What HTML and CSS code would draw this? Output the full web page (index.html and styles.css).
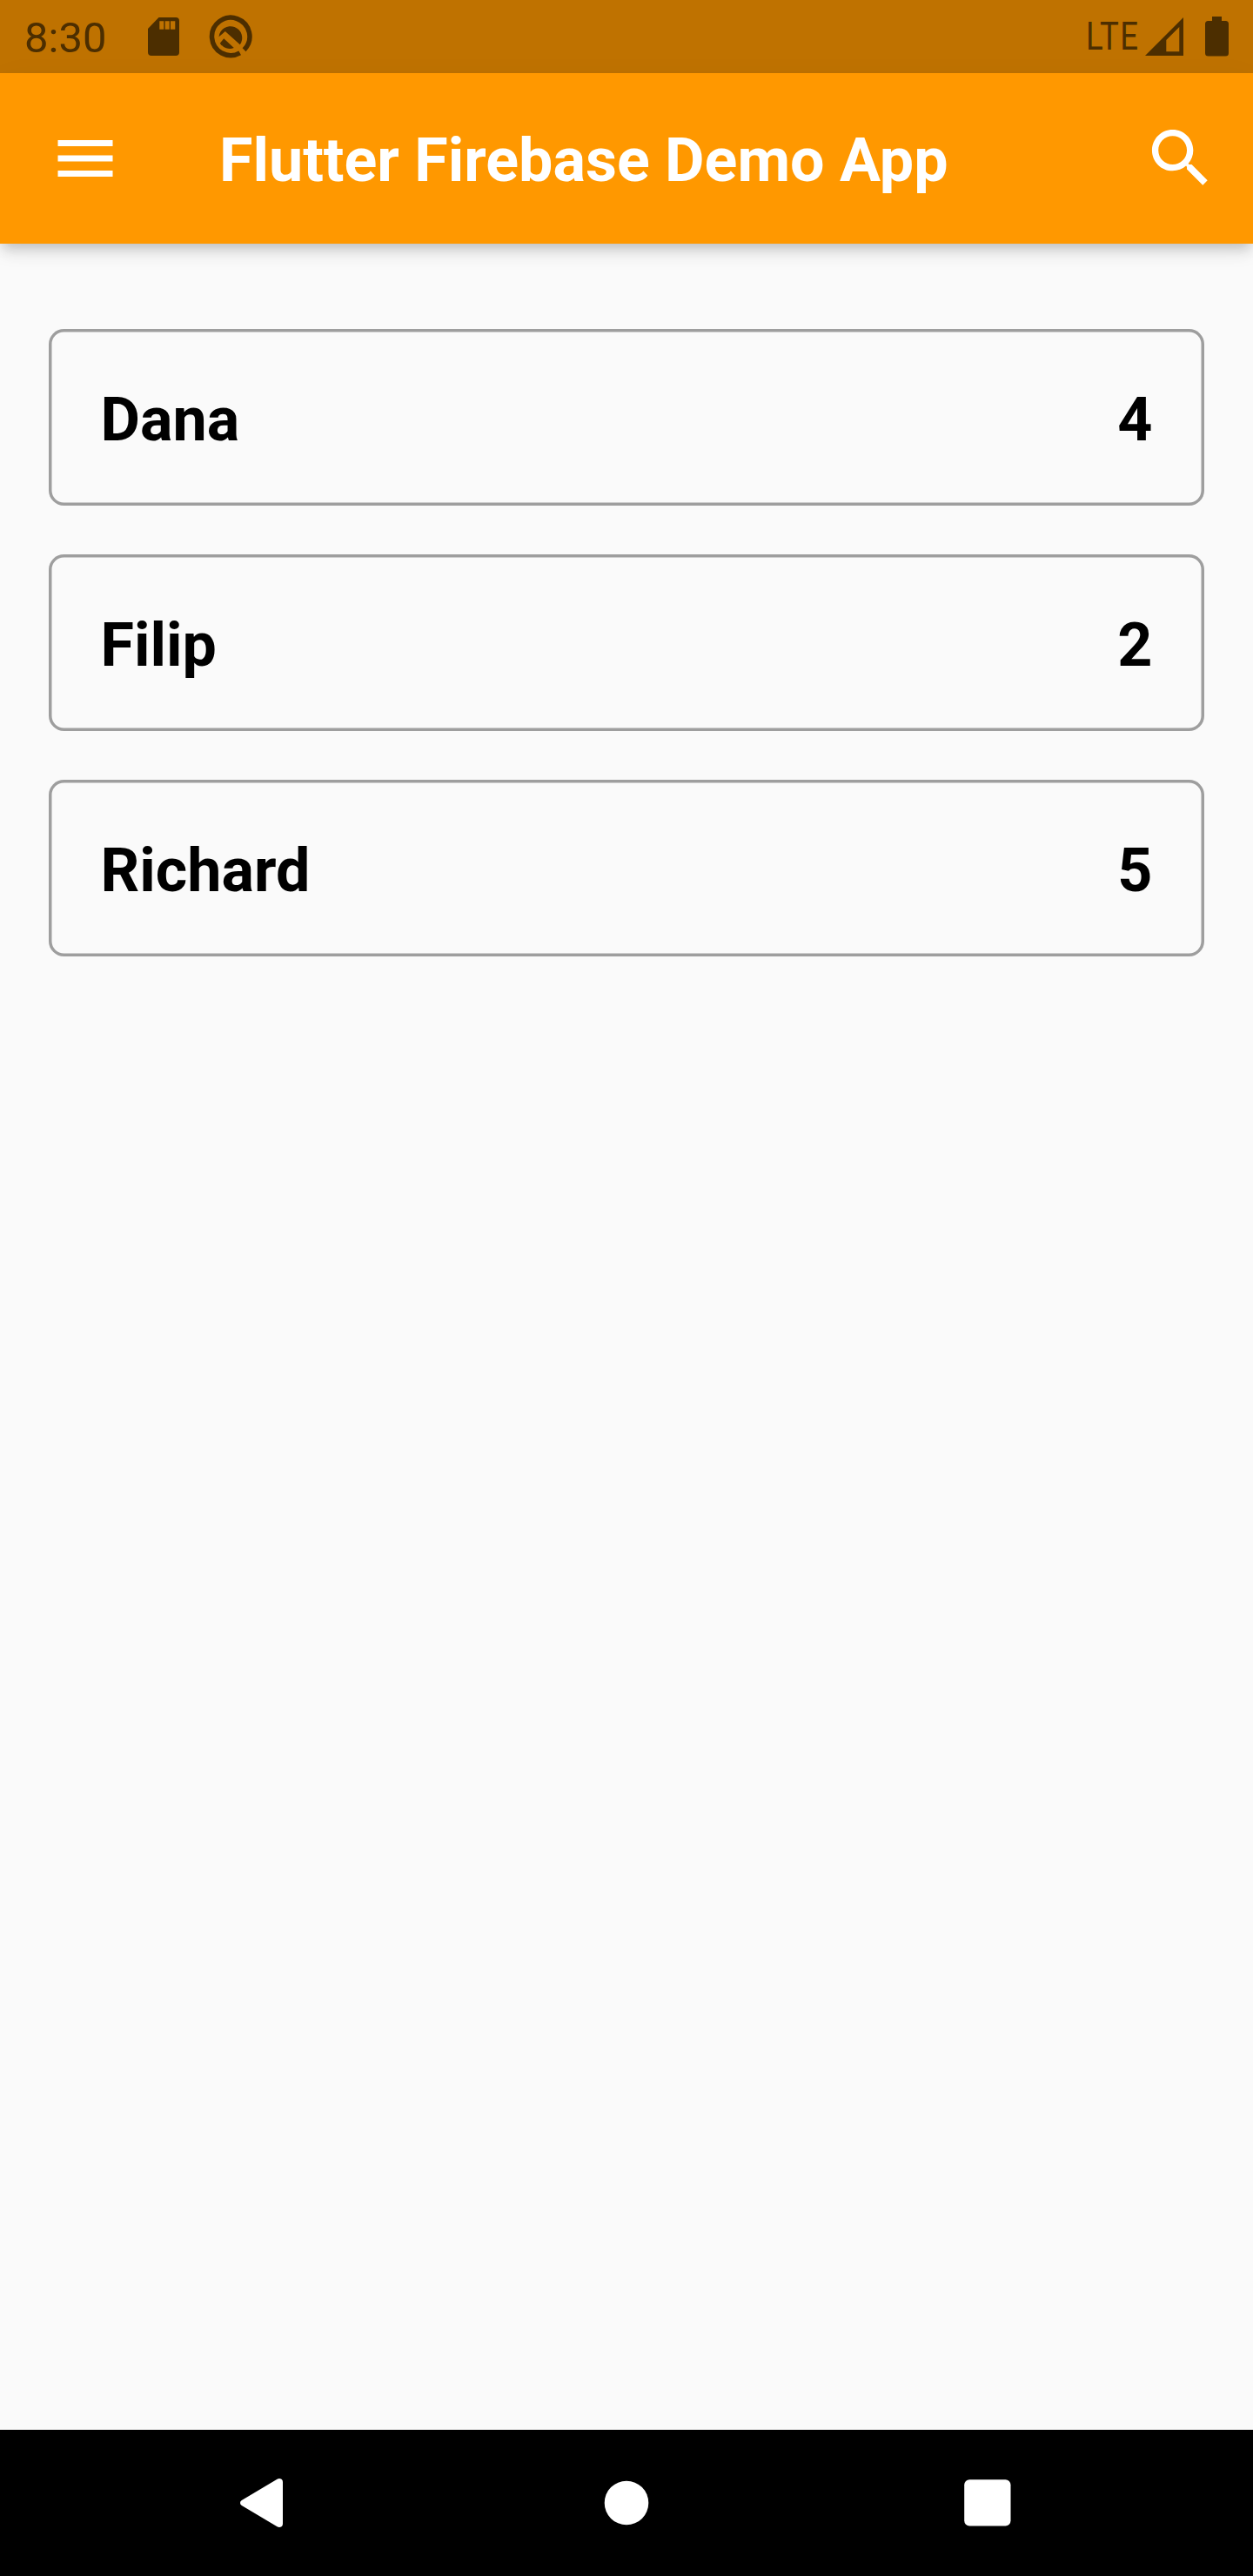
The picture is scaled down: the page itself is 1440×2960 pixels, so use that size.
FILE: index.html
```html
<!DOCTYPE html>
<html lang="en">
<head>
<meta charset="utf-8">
<title>Flutter Firebase Demo App</title>
<link rel="stylesheet" href="styles.css">
</head>
<body>
<div class="screen">
  <header class="status-bar">
    <span class="clock">8:30</span>
    <svg class="sd-icon" viewBox="0 0 36 44"><path fill-rule="evenodd" d="M12.5 0H32a4 4 0 0 1 4 4v36a4 4 0 0 1-4 4H4a4 4 0 0 1-4-4V13zM13.3 4.3v9.5h5v-9.5zM19.7 4.3v9.5h5v-9.5zM26 4.3v9.5h5.3v-9.5z"/></svg>
    <svg class="q-icon" viewBox="0 0 50 50">
      <path class="ring" d="M35.700 43.900A21.700 21.700 0 1 1 40.600 40.200"/>
      <path d="M11.500 25.300L18.800 19L35.800 34.300A13.400 13.400 0 1 0 11.500 25.300z"/>
      <path d="M12.800 32.700L17.200 27.300L28.800 38A13.400 13.400 0 0 1 12.800 32.700z"/>
    </svg>
    <div class="indicators">
      <svg class="network" viewBox="-4 0 66 44"><text transform="scale(.84 1)" x="-2.300 16.800 44.400" y="40">LTE</text></svg>
      <svg class="signal" viewBox="0 0 44 44"><path fill-rule="evenodd" d="M44 0V44H0zM39.300 11L24.300 26V39.300H39.300z"/></svg>
      <svg class="battery" viewBox="0 0 27 46"><path d="M8 0h11v5h4.500a3.500 3.500 0 0 1 3.500 3.500v33.500a3.500 3.500 0 0 1-3.500 3.500h-20a3.500 3.500 0 0 1-3.500-3.500v-33.500a3.500 3.500 0 0 1 3.500-3.500h4.500z"/></svg>
    </div>
  </header>
  <div class="app-bar">
    <svg class="menu-icon" viewBox="0 0 24 24"><path d="M3 18h18v-2H3v2zm0-5h18v-2H3v2zm0-7v2h18V6H3z"/></svg>
    <h1 class="title">Flutter Firebase Demo App</h1>
    <svg class="search-icon" viewBox="0 0 24 24"><path d="M15.500 14h-.79l-.28-.27C15.410 12.590 16 11.110 16 9.500 16 5.910 13.090 3 9.500 3S3 5.910 3 9.500 5.910 16 9.500 16c1.610 0 3.090-.59 4.230-1.570l.27.28v.79l5 4.990L20.490 19l-4.990-5zm-6 0C7.010 14 5 11.990 5 9.500S7.010 5 9.500 5 14 7.010 14 9.500 11.990 14 9.500 14z"/></svg>
  </div>
  <main class="list">
    <div class="card"><span>Dana</span><span>4</span></div>
    <div class="card"><span>Filip</span><span>2</span></div>
    <div class="card"><span>Richard</span><span>5</span></div>
  </main>
  <nav class="nav-bar">
    <svg class="nav-icon" viewBox="0 0 64 64"><path d="M4.800 29L45.500 4.800Q48 3.300 50.500 4.800Q52 5.800 52 8V56Q52 58.200 50.500 59.200Q48 60.700 45.500 59.200L4.800 35Q3 33.800 3 32Q3 30.200 4.800 29z"/></svg>
    <svg class="nav-icon" viewBox="0 0 64 64"><circle cx="32" cy="32" r="25.300"/></svg>
    <svg class="nav-icon" viewBox="0 0 64 64"><rect x="5.200" y="5.200" width="53.300" height="53.300" rx="6"/></svg>
  </nav>
</div>
</body>
</html>
```
FILE: styles.css
```css
* { box-sizing: border-box; }
body { margin: 0; font-family: Roboto, "Liberation Sans", sans-serif; }
svg { display: block; flex: none; }
.screen { width: 1440px; height: 2960px; display: flex; flex-direction: column; background: #fafafa; }
.status-bar { height: 84px; flex: none; display: flex; align-items: flex-start; padding: 0 28px; background: #bf7200; color: #4c2e00; fill: #4c2e00; }
.clock { width: 141.500px; font-size: 49px; line-height: 58px; padding-top: 15px; }
.sd-icon { width: 36px; height: 44px; margin-top: 20px; }
.q-icon { width: 50px; height: 50px; margin: 17px 0 0 34px; }
.ring { fill: none; stroke: #4c2e00; stroke-width: 5.500; }
.indicators { display: flex; align-items: flex-start; margin-left: auto; }
.network { width: 66px; height: 44px; margin-top: 17px; font-size: 43.500px; overflow: visible; }
.signal { width: 44px; height: 44px; margin: 20px 25px 0 4px; }
.battery { width: 27px; height: 46px; margin-top: 19px; }
.app-bar { position: relative; height: 196px; flex: none; display: flex; align-items: center; padding: 0 40px 0 56px; background: #ff9800; color: #fff; fill: #fff; box-shadow: 0 7px 14px -3.500px rgba(0,0,0,.2), 0 14px 17.500px rgba(0,0,0,.05), 0 3.500px 35px rgba(0,0,0,.03); }
.menu-icon { width: 84px; height: 84px; }
.title { flex: 1; margin: 0 0 0 112px; padding-top: 4px; font-size: 70px; line-height: 82px; font-weight: 700; white-space: nowrap; }
.search-icon { width: 87.500px; height: 87.500px; }
.list { flex: 1; display: flex; flex-direction: column; gap: 56px; padding: 98px 56px; }
.card { height: 203px; display: flex; align-items: center; justify-content: space-between; padding: 4px 59.500px 0; border-radius: 17.500px; box-shadow: inset 0 0 0 3.500px #9e9e9e; color: #000; font-size: 70px; line-height: 82px; font-weight: 700; }
.nav-bar { height: 168px; flex: none; display: flex; align-items: center; justify-content: space-between; padding: 0 273px; background: #000; fill: #fff; }
.nav-icon { width: 64px; height: 64px; }
```
